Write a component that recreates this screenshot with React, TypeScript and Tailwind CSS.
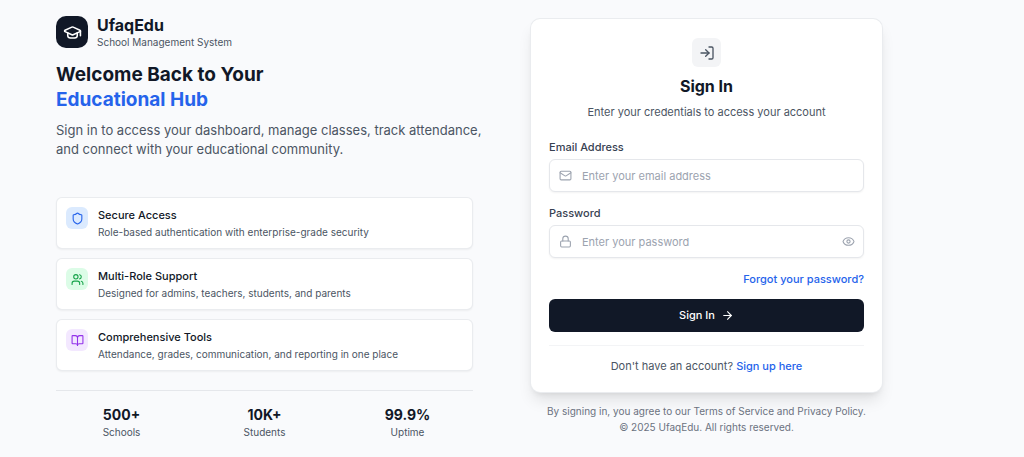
import { useState } from 'react'
import {
  ArrowRight,
  BookOpen,
  Eye,
  EyeOff,
  GraduationCap,
  Lock,
  LogIn,
  Mail,
  Shield,
  Users,
} from 'lucide-react'

const features = [
  {
    title: 'Secure Access',
    description: 'Role-based authentication with enterprise-grade security',
    icon: Shield,
    color: 'bg-[#dbeafe] text-[#2563eb]',
  },
  {
    title: 'Multi-Role Support',
    description: 'Designed for admins, teachers, students, and parents',
    icon: Users,
    color: 'bg-[#dcfce7] text-[#16a34a]',
  },
  {
    title: 'Comprehensive Tools',
    description: 'Attendance, grades, communication, and reporting in one place',
    icon: BookOpen,
    color: 'bg-[#f3e8ff] text-[#9333ea]',
  },
]

const stats = [
  { value: '500+', label: 'Schools' },
  { value: '10K+', label: 'Students' },
  { value: '99.9%', label: 'Uptime' },
]

const inputClass =
  'h-[33px] w-full rounded-md border border-[#e5e7eb] bg-white pl-8 text-[11px] text-[#111827] shadow-xs outline-none placeholder:text-[#9ca3af] focus:border-[#9ca3af]'

function Intro() {
  return (
    <section>
      <div className="flex items-center gap-[9px]">
        <div className="flex size-8 items-center justify-center rounded-[10px] bg-[#111827]">
          <GraduationCap className="size-[19px] text-white" />
        </div>
        <div>
          <p className="text-base leading-5 font-bold">UfaqEdu</p>
          <p className="text-[10px] leading-[14px] text-[#4b5563]">School Management System</p>
        </div>
      </div>

      <h1 className="mt-[13px] text-[19px] leading-[25px] font-bold">
        Welcome Back to Your
        <span className="block text-[#2563eb]">Educational Hub</span>
      </h1>
      <p className="-mr-3 mt-[9px] text-[13px] leading-[19px] text-[#4b5563]">
        Sign in to access your dashboard, manage classes, track attendance, and connect with your
        educational community.
      </p>

      <div className="mt-[38px] flex flex-col gap-[9px]">
        {features.map((feature) => (
          <div
            key={feature.title}
            className="flex items-start gap-[10px] rounded-md border border-[#e5e7eb]/80 bg-white p-[9px] shadow-xs"
          >
            <div className={`flex size-[22px] shrink-0 items-center justify-center rounded-md ${feature.color}`}>
              <feature.icon className="size-[13px]" />
            </div>
            <div>
              <h3 className="text-[11px] leading-4 font-medium">{feature.title}</h3>
              <p className="mt-0.5 text-[10px] leading-[14px] text-[#4b5563]">{feature.description}</p>
            </div>
          </div>
        ))}
      </div>

      <div className="mt-[19px] grid grid-cols-3 gap-3 border-t border-[#e5e7eb] pt-[14px] text-center">
        {stats.map((stat) => (
          <div key={stat.label}>
            <p className="text-sm leading-5 font-bold">{stat.value}</p>
            <p className="text-[10px] leading-[14px] text-[#4b5563]">{stat.label}</p>
          </div>
        ))}
      </div>
    </section>
  )
}

function SignInForm() {
  const [showPassword, setShowPassword] = useState(false)
  const EyeIcon = showPassword ? EyeOff : Eye

  return (
    <section className="mx-8 mt-[3px]">
      <div className="rounded-[10px] border border-[#e5e7eb]/80 bg-white px-[18px] pt-[19px] pb-[18px] shadow-lg">
        <div className="text-center">
          <div className="mx-auto flex size-[29px] items-center justify-center rounded-md bg-[#f3f4f6]">
            <LogIn className="size-4 text-[#4b5563]" />
          </div>
          <h2 className="mt-[9px] text-base leading-5 font-bold">Sign In</h2>
          <p className="mt-2 text-[11px] leading-4 text-[#4b5563]">
            Enter your credentials to access your account
          </p>
        </div>

        <form className="mt-[19px]" onSubmit={(e) => e.preventDefault()}>
          <label htmlFor="email" className="block text-[11px] leading-4 font-medium text-[#374151]">
            Email Address
          </label>
          <div className="relative mt-1">
            <Mail className="absolute top-[10px] left-[10px] size-[13px] text-[#9ca3af]" />
            <input id="email" type="email" placeholder="Enter your email address" className={`${inputClass} pr-3`} />
          </div>

          <label htmlFor="password" className="mt-[13px] block text-[11px] leading-4 font-medium text-[#374151]">
            Password
          </label>
          <div className="relative mt-1">
            <Lock className="absolute top-[10px] left-[10px] size-[13px] text-[#9ca3af]" />
            <input
              id="password"
              type={showPassword ? 'text' : 'password'}
              placeholder="Enter your password"
              className={`${inputClass} pr-8`}
            />
            <button
              type="button"
              aria-label="Toggle password visibility"
              onClick={() => setShowPassword(!showPassword)}
              className="absolute top-[10px] right-[9px] text-[#9ca3af]"
            >
              <EyeIcon className="size-[13px]" />
            </button>
          </div>

          <div className="mt-[13px] flex justify-end text-[11px] leading-4">
            <a href="#" className="font-medium text-[#2563eb]">Forgot your password?</a>
          </div>

          <button
            type="submit"
            className="mt-3 flex h-[33px] w-full items-center justify-center gap-1.5 rounded-md bg-[#111827] text-[11px] font-medium text-white"
          >
            Sign In
            <ArrowRight className="size-[13px]" />
          </button>
        </form>

        <p className="mt-[13px] border-t border-[#f3f4f6] pt-3 text-center text-[11px] leading-4 text-[#4b5563]">
          Don't have an account?{' '}
          <a href="#" className="font-medium text-[#2563eb]">Sign up here</a>
        </p>
      </div>

      <p className="mt-[10px] text-center text-[10px] leading-4 text-[#6b7280]">
        By signing in, you agree to our Terms of Service and Privacy Policy.
        <br />
        © 2025 UfaqEdu. All rights reserved.
      </p>
    </section>
  )
}

export default function App() {
  return (
    <main className="min-h-screen bg-[#f9fafc] pt-[15px] pr-[109px] pl-14 font-['Inter',sans-serif] text-[#111827]">
      <div className="grid grid-cols-2 gap-[25px]">
        <Intro />
        <SignInForm />
      </div>
    </main>
  )
}
